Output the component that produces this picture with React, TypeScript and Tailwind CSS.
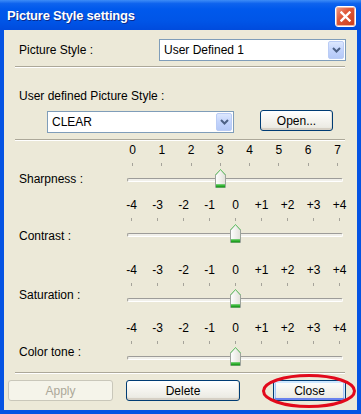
import React from "react";

const FONT = "font-['Liberation_Sans',Arial,sans-serif]";

function Chevron() {
  return (
    <svg width="9" height="6" viewBox="0 0 9 6">
      <path d="M1 1 L4.5 4.5 L8 1" fill="none" stroke="#4D6185" strokeWidth="2" />
    </svg>
  );
}

function Combo({ text, width }: { text: string; width: string }) {
  return (
    <div className={`${width} h-[22px] border border-[#7F9DB9] bg-white flex items-center`}>
      <span className="flex-1 pl-[4px] text-[12px] leading-[14px] text-black">{text}</span>
      <div className="w-[16px] h-[18px] mr-[1px] rounded-[2px] border border-[#BACCF5] bg-[linear-gradient(to_bottom,#DDE8FE,#C3D4FC_50%,#B5C9F7)] flex items-center justify-center">
        <Chevron />
      </div>
    </div>
  );
}

function XPButton({
  label,
  width,
  variant = "normal",
}: {
  label: string;
  width: string;
  variant?: "normal" | "disabled" | "default";
}) {
  const base = `${width} h-[21px] rounded-[3px] border flex items-center justify-center text-[12px] leading-[14px]`;
  if (variant === "disabled") {
    return (
      <div className={`${base} border-[#C9C7BA] bg-[#F5F4EA] text-[#ACA899]`}>{label}</div>
    );
  }
  const ring =
    variant === "default"
      ? "shadow-[inset_0_1px_0_1px_#CEE7FF,inset_0_-1px_0_1px_#6982EE,inset_1px_0_0_1px_#A8C5F5,inset_-1px_0_0_1px_#A8C5F5]"
      : "shadow-[inset_0_-2px_0_#D6D0C5,inset_-1px_0_0_#E3E1D7]";
  return (
    <div
      className={`${base} border-[#003C74] bg-[linear-gradient(to_bottom,#FFFFFF,#F4F3EE_50%,#ECEBE4_85%,#DCD8CC)] text-black ${ring}`}
    >
      {label}
    </div>
  );
}

function Separator() {
  return (
    <div className="ml-[11px] w-[330px] h-[2px] border-t border-[#ACA899] border-b border-b-white" />
  );
}

function Thumb() {
  return (
    <svg width="11" height="19" viewBox="0 0 11 19">
      <defs>
        <linearGradient id="thumbg" x1="0" x2="1" y1="0" y2="0">
          <stop offset="0" stopColor="#FFFFFF" />
          <stop offset="1" stopColor="#E2E1DA" />
        </linearGradient>
      </defs>
      <path d="M0.5 6 L5.5 0.5 L10.5 6 L10.5 18.5 L0.5 18.5 Z" fill="url(#thumbg)" stroke="#9CA39C" />
      <path d="M0.5 6 L5.5 0.5 L10.5 6" fill="none" stroke="#6BCB6B" />
      <rect x="1" y="15.5" width="9" height="3" fill="#21A121" />
      <rect x="1" y="15.5" width="9" height="1" fill="#58CE58" />
    </svg>
  );
}

type SliderDef = {
  label: string;
  labels: string[];
  value: number;
  scale: string;
  ml: number;
  w: number;
  mt: string;
  labelPt: string;
};

const sliders: SliderDef[] = [
  {
    label: "Sharpness :",
    labels: ["0", "1", "2", "3", "4", "5", "6", "7"],
    value: 3,
    scale: "ml-[5px] w-[206px]",
    ml: 5,
    w: 206,
    mt: "mt-[3px]",
    labelPt: "pt-[28px]",
  },
  {
    label: "Contrast :",
    labels: ["-4", "-3", "-2", "-1", "0", "+1", "+2", "+3", "+4"],
    value: 4,
    scale: "ml-[4px] w-[209px]",
    ml: 4,
    w: 209,
    mt: "mt-[11px]",
    labelPt: "pt-[30px]",
  },
  {
    label: "Saturation :",
    labels: ["-4", "-3", "-2", "-1", "0", "+1", "+2", "+3", "+4"],
    value: 4,
    scale: "ml-[4px] w-[209px]",
    ml: 4,
    w: 209,
    mt: "mt-[21px]",
    labelPt: "pt-[24px]",
  },
  {
    label: "Color tone :",
    labels: ["-4", "-3", "-2", "-1", "0", "+1", "+2", "+3", "+4"],
    value: 4,
    scale: "ml-[4px] w-[209px]",
    ml: 4,
    w: 209,
    mt: "mt-[14px]",
    labelPt: "pt-[23px]",
  },
];

function Slider({ s }: { s: SliderDef }) {
  const n = s.labels.length;
  const center = s.ml + (s.value / (n - 1)) * (s.w - 1);
  return (
    <div className={`flex ${s.mt}`}>
      <div className={`w-[123px] pl-[15px] ${s.labelPt} text-[12px] leading-[14px] text-black`}>{s.label}</div>
      <div className="w-[216px] flex flex-col">
        <div className={`${s.scale} h-[13px] flex justify-between`}>
          {s.labels.map((l) => (
            <div key={l} className="w-[1px] flex justify-center whitespace-nowrap text-[12px] leading-[13px] text-black">
              {l}
            </div>
          ))}
        </div>
        <div className={`${s.scale} h-[3px] mt-[6px] flex justify-between`}>
          {s.labels.map((l) => (
            <div key={l} className="w-[1px] h-[3px] bg-[#A5A39A]" />
          ))}
        </div>
        <div className="relative h-[19px] mt-[3px]">
          <div className="absolute left-0 right-0 top-[9px] h-[4px] rounded-[2px] border border-[#9D9C99] border-b-white border-r-white bg-[#F1F0EA]" />
          <div className="absolute top-0" style={{ left: Math.round(center - 5) }}>
            <Thumb />
          </div>
        </div>
      </div>
    </div>
  );
}

export default function App() {
  return (
    <div className={`${FONT} w-[361px] h-[414px] flex flex-col bg-[#0553E3]`}>
      <div className="h-[30px] flex items-center justify-between pl-[7px] pr-[5px] bg-[linear-gradient(to_bottom,#3D8CF7_0%,#0E63EE_12%,#0059EC_30%,#0055E7_70%,#004BDD_100%)]">
        <span className="text-white font-bold text-[13px] leading-[15px] tracking-[-0.2px] [text-shadow:1px_1px_#0B2A8C]">
          Picture Style settings
        </span>
        <div className="mt-[2px] w-[21px] h-[21px] rounded-[3px] border border-white bg-[linear-gradient(135deg,#F0A08A,#E0593A_40%,#C73C1C)] flex items-center justify-center shadow-[inset_0_0_0_1px_#F3B7A4]">
          <svg width="11" height="11" viewBox="0 0 11 11">
            <path d="M1.5 1.5 L9.5 9.5 M9.5 1.5 L1.5 9.5" stroke="white" strokeWidth="2.4" strokeLinecap="square" />
          </svg>
        </div>
      </div>
      <div className="relative flex-1 mx-[4px] mb-[4px] bg-[#ECE9D8] flex flex-col text-black">
        <div className="mt-[9px] flex items-center h-[22px]">
          <div className="w-[155px] pl-[15px] text-[12px] leading-[14px]">Picture Style :</div>
          <Combo text="User Defined 1" width="w-[187px]" />
        </div>
        <div className="mt-[5px]">
          <Separator />
        </div>
        <div className="mt-[21px] pl-[15px] text-[12px] leading-[14px]">User defined Picture Style :</div>
        <div className="mt-[8px] flex items-start h-[22px]">
          <div className="ml-[43px]">
            <Combo text="CLEAR" width="w-[187px]" />
          </div>
          <div className="ml-[26px] -mt-[1px]">
            <XPButton label="Open..." width="w-[73px]" />
          </div>
        </div>
        <div className="mt-[6px]">
          <Separator />
        </div>
        {sliders.map((s) => (
          <Slider key={s.label} s={s} />
        ))}
        <div className="mt-[6px]">
          <Separator />
        </div>
        <div className="mt-[6px] flex">
          <div className="ml-[4px]">
            <XPButton label="Apply" width="w-[105px]" variant="disabled" />
          </div>
          <div className="ml-[13px]">
            <XPButton label="Delete" width="w-[114px]" />
          </div>
          <div className="ml-[33px]">
            <XPButton label="Close" width="w-[73px]" variant="default" />
          </div>
        </div>
        <svg className="absolute left-[257px] top-[343px] pointer-events-none" width="96" height="36" viewBox="0 0 96 36">
          <ellipse cx="48" cy="18" rx="45.5" ry="15.5" fill="none" stroke="#E2091B" strokeWidth="3" />
        </svg>
      </div>
    </div>
  );
}
